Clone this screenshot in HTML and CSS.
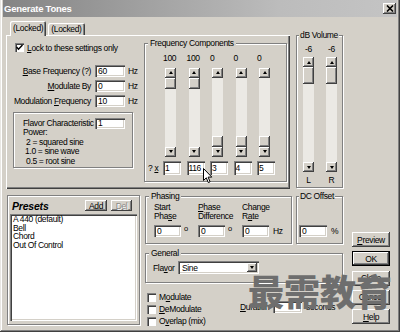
FILE: index.html
```html
<!DOCTYPE html>
<html>
<head>
<meta charset="utf-8">
<title>Generate Tones</title>
<link rel="stylesheet" href="styles.css">
</head>
<body>
<div class="window">
  <div class="titlebar">
    <span class="title">Generate Tones</span>
    <span class="xbtn"><svg width="8" height="7" viewBox="0 0 8 7"><path d="M1 0.5 L7 6.5 M7 0.5 L1 6.5" stroke="#000" stroke-width="1.6"/></svg></span>
  </div>
  <div class="client">
    <div class="main">
      <div class="top">
        <div class="tabctl">
          <div class="tabs">
            <div class="tab active">(Locked)</div>
            <div class="tab">(Locked)</div>
          </div>
          <div class="tabpage">
            <div class="leftcol">
              <div class="check">
                <span class="cb"><svg width="7" height="7" viewBox="0 0 7 7"><path d="M0.5 3 L2.5 5.2 L6.5 1" fill="none" stroke="#000" stroke-width="1.5"/></svg></span>
                <span><u>L</u>ock to these settings only</span>
              </div>
              <div class="fields">
                <div class="field"><span class="flabel"><u>B</u>ase Frequency (?)</span><span class="edit">60</span><span class="unit">Hz</span></div>
                <div class="field"><span class="flabel"><u>M</u>odulate By</span><span class="edit">0</span><span class="unit">Hz</span></div>
                <div class="field"><span class="flabel">Modulation <u>F</u>requency</span><span class="edit">10</span><span class="unit">Hz</span></div>
              </div>
              <div class="flavorbox">
                <div class="frow"><span class="frlabel">Flavor Characteristic</span><span class="edit small">1</span></div>
                <div class="pline">Power:</div>
                <div class="pline ind">2 = squared sine</div>
                <div class="pline ind2">1.0 = sine wave</div>
                <div class="pline ind">0.5 = root sine</div>
              </div>
            </div>
            <fieldset class="group freq">
              <legend>Frequency Components</legend>
              <div class="fgrid">
                <span></span>
                <span class="val">100</span>
                <span class="val">100</span>
                <span class="val">0</span>
                <span class="val">0</span>
                <span class="val">0</span>

                <span></span>
                <div class="slider"><span class="sb up"></span><span class="track"><span class="thumb"></span></span><span class="sb down"></span></div>
                <div class="slider"><span class="sb up"></span><span class="track"><span class="thumb"></span></span><span class="sb down"></span></div>
                <div class="slider"><span class="sb up"></span><span class="track low"><span class="thumb"></span></span><span class="sb down"></span></div>
                <div class="slider"><span class="sb up"></span><span class="track low"><span class="thumb"></span></span><span class="sb down"></span></div>
                <div class="slider"><span class="sb up"></span><span class="track low"><span class="thumb"></span></span><span class="sb down"></span></div>

                <span class="qx">? <u>x</u></span>
                <span class="edit">1</span>
                <span class="edit">116</span>
                <span class="edit">3</span>
                <span class="edit">4</span>
                <span class="edit">5</span>
              </div>
            </fieldset>
          </div>
        </div>
        <fieldset class="group vol">
          <legend>dB Volume</legend>
          <div class="vgrid">
            <span class="vlab">-6</span>
            <span class="vlab">-6</span>
            <div class="slider tall"><span class="sb up"></span><span class="track"><span class="thumb big"></span></span><span class="sb down"></span></div>
            <div class="slider tall"><span class="sb up"></span><span class="track"><span class="thumb big"></span></span><span class="sb down"></span></div>
            <span class="vlab">L</span>
            <span class="vlab">R</span>
          </div>
        </fieldset>
      </div>

      <div class="bottom">
        <div class="presets">
          <div class="phead">
            <span class="ptitle">Presets</span>
            <span class="btn add">Add</span>
            <span class="btn del">Del</span>
          </div>
          <div class="plist">
            <div>A 440 (default)</div>
            <div>Bell</div>
            <div>Chord</div>
            <div>Out Of Control</div>
          </div>
        </div>
        <div class="right">
          <div class="row1">
            <fieldset class="group phasing">
              <legend>Phasing</legend>
              <div class="pcols">
                <div class="pcol">
                  <div class="plabel">Start<br>Pha<u>s</u>e</div>
                  <div class="pin"><span class="edit w27">0</span><span class="deg">o</span></div>
                </div>
                <div class="pcol">
                  <div class="plabel"><u>P</u>hase<br>Difference</div>
                  <div class="pin"><span class="edit w27">0</span><span class="deg">o</span></div>
                </div>
                <div class="pcol">
                  <div class="plabel">Change<br>R<u>a</u>te</div>
                  <div class="pin"><span class="edit w27">0</span><span class="unit">Hz</span></div>
                </div>
              </div>
            </fieldset>
            <fieldset class="group dc">
              <legend>DC Offset</legend>
              <div class="pin dcin"><span class="edit w28">0</span><span class="unit">%</span></div>
            </fieldset>
          </div>
          <fieldset class="group general">
            <legend>General</legend>
            <div class="grow">
              <span class="glabel">Fla<u>v</u>or</span>
              <span class="combo"><span class="ctext">Sine</span><span class="cbtn"><span class="tri down"></span></span></span>
            </div>
          </fieldset>
          <div class="checkarea">
            <div class="checks">
              <div class="crow"><span class="cb"></span><span>M<u>o</u>dulate</span></div>
              <div class="crow"><span class="cb"></span><span><u>D</u>eModulate</span></div>
              <div class="crow"><span class="cb"></span><span>O<u>v</u>erlap (mix)</span></div>
            </div>
            <div class="duration">
              <span class="dlabel"><u>D</u>uration</span>
              <span class="edit w29">5</span>
              <span class="unit">seconds</span>
            </div>
          </div>
        </div>
      </div>
    </div>
    <div class="buttons">
      <span class="btn big"><u>P</u>review</span>
      <span class="btn big def">OK</span>
      <span class="btn big">Close</span>
      <span class="btn big">Cancel</span>
      <span class="btn big"><u>H</u>elp</span>
    </div>
  </div>
  <div class="watermark">最需教育</div>
  <svg class="cursor" width="10" height="16" viewBox="0 0 10 16"><path d="M0.5 0.5 L0.5 12.5 L3.3 9.8 L5.3 14.6 L7.1 13.8 L5.1 9.1 L8.8 9.1 Z" fill="#fff" stroke="#000" stroke-width="1" stroke-linejoin="miter"/></svg>
</div>
</body>
</html>
```

FILE: styles.css
```css
* { box-sizing: border-box; }
html, body { margin: 0; padding: 0; }
body {
  width: 400px;
  height: 332px;
  overflow: hidden;
  background: #d4d0c8;
  font-family: "Liberation Sans", Arial, sans-serif;
  font-size: 8.5px;
  letter-spacing: -0.35px;
  color: #000;
}
u { text-decoration: underline; text-underline-offset: 1px; }

.window {
  position: relative;
  width: 400px;
  height: 332px;
  background: #d4d0c8;
  padding: 0 3px 3px 3px;
  display: flex;
  flex-direction: column;
  box-shadow: inset -1px -1px #404040, inset 1px 0 #e8e6e2, inset -2px -2px #808080, inset 2px 0 #fff;
}

/* title bar */
.titlebar {
  height: 17px;
  display: flex;
  align-items: center;
  padding: 0 1px 0 1px;
  background: linear-gradient(to right, #848484, #bcbcbc 70%, #c4c4c4);
}
.title {
  flex: 1;
  color: #fff;
  font-weight: bold;
  font-size: 9.5px;
  letter-spacing: -0.25px;
}
.xbtn {
  width: 13px;
  height: 11px;
  display: flex;
  align-items: center;
  justify-content: center;
  background: #d4d0c8;
  box-shadow: inset -1px -1px #404040, inset 1px 1px #fff, inset -2px -2px #808080;
}

/* common widgets */
.edit {
  display: flex;
  align-items: center;
  width: 30px;
  height: 12px;
  padding-left: 3px;
  background: #fff;
  white-space: nowrap;
  overflow: hidden;
  box-shadow: inset 1px 1px #808080, inset 2px 2px #404040, inset -1px -1px #fff, inset -2px -2px #d4d0c8;
}
.edit.small { height: 11px; }
.edit.w27 { width: 27px; }
.edit.w28 { width: 28px; }
.edit.w29 { width: 29px; color: #fff; }
.unit { margin-left: 3px; }

.cb {
  width: 9px;
  height: 9px;
  flex: none;
  display: flex;
  align-items: center;
  justify-content: center;
  background: #fff;
  box-shadow: inset 1px 1px #808080, inset 2px 2px #404040, inset -1px -1px #fff;
}

.btn {
  display: flex;
  align-items: center;
  justify-content: center;
  background: #d4d0c8;
  box-shadow: inset -1px -1px #404040, inset 1px 1px #fff, inset -2px -2px #808080;
}

.group {
  margin: 0;
  padding: 0;
  min-width: 0;
  border: 1px solid #808080;
  box-shadow: inset 1px 1px #fff, 1px 1px #fff;
}
.group legend {
  padding: 0 2px;
  margin-left: 3px;
  line-height: 10px;
  height: 10px;
  white-space: nowrap;
  background: #d4d0c8;
}

/* layout */
.client {
  flex: 1;
  display: flex;
  padding-top: 4px;
}
.main { width: 340px; }
.top { display: flex; height: 168px; }

.tabctl { margin-left: 3px; width: 284px; }
.tabs {
  height: 14px;
  display: flex;
  align-items: flex-end;
  padding-left: 4px;
}
.tab {
  height: 12px;
  padding: 0 3px;
  margin-left: 2px;
  display: flex;
  align-items: center;
  border-radius: 2px 2px 0 0;
  box-shadow: inset 1px 1px #fff, inset -1px 0 #404040, inset -2px 0 #808080;
}
.tab.active {
  position: relative;
  z-index: 1;
  height: 15px;
  margin-left: 0;
  margin-bottom: -1px;
  padding: 0 3px 2px 3px;
  background: #d4d0c8;
}
.tabpage {
  height: 154px;
  display: flex;
  padding-left: 7px;
  box-shadow: inset 1px 1px #fff, inset -1px -1px #404040, inset -2px -2px #808080;
}

.leftcol {
  width: 128px;
  display: flex;
  flex-direction: column;
  padding-top: 8px;
}
.check {
  height: 9px;
  display: flex;
  align-items: center;
  gap: 3px;
  margin-left: 2px;
  white-space: nowrap;
}
.fields {
  margin-top: 13px;
  display: flex;
  flex-direction: column;
  gap: 3px;
}
.field {
  height: 12px;
  display: flex;
  align-items: center;
}
.flabel {
  width: 78px;
  text-align: right;
  white-space: nowrap;
  margin-right: 4px;
}
.flavorbox {
  margin-top: 5px;
  width: 120px;
  height: 56px;
  padding: 5px 0 0 9px;
  border: 1px solid #808080;
  box-shadow: inset 1px 1px #fff, 1px 1px #fff;
}
.frow { height: 10px; display: flex; align-items: center; }
.frlabel { width: 72px; white-space: nowrap; }
.pline { line-height: 9.7px; white-space: nowrap; }
.pline.ind { padding-left: 3px; }
.pline.ind2 { padding-left: 2px; }

.freq {
  margin-left: 3px;
  margin-top: 3px;
  width: 143px;
  height: 144px;
}
.fgrid {
  display: grid;
  grid-template-columns: 9.5px repeat(5, 18px);
  grid-template-rows: 10px 89px 14px;
  column-gap: 5.5px;
  row-gap: 4.5px;
  padding: 5px 0 0 3px;
}
.val { line-height: 10px; }
.qx { white-space: nowrap; align-self: center; }
.fgrid .edit { width: 18px; height: 14px; padding-left: 2px; }

.slider {
  width: 11px;
  height: 89px;
  margin-left: 2px;
  display: flex;
  flex-direction: column;
}
.slider.tall { height: 115px; margin-left: 0; }
.sb {
  height: 10px;
  flex: none;
  display: flex;
  align-items: center;
  justify-content: center;
  background: #d4d0c8;
  box-shadow: inset -1px -1px #404040, inset 1px 1px #fff, inset -2px -2px #808080;
}
.sb::after {
  content: "";
  width: 0;
  height: 0;
  border-left: 2.5px solid transparent;
  border-right: 2.5px solid transparent;
}
.sb.up::after { border-bottom: 3px solid #000; }
.sb.down::after { border-top: 3px solid #000; }
.track {
  flex: 1;
  display: flex;
  flex-direction: column;
  background: #ebe9e4;
}
.track.low { justify-content: flex-end; }
.thumb {
  height: 11px;
  background: #d4d0c8;
  box-shadow: inset -1px -1px #404040, inset 1px 1px #fff, inset -2px -2px #808080;
}
.thumb.big { height: 17px; }

.vol {
  margin-left: 6px;
  margin-top: 9px;
  width: 47px;
  height: 158px;
}
.vol legend { margin-left: 2px; padding: 0 1px; }
.vgrid {
  display: grid;
  grid-template-columns: 11px 11px;
  grid-template-rows: 10px 115px 10px;
  column-gap: 12px;
  row-gap: 3px;
  padding: 4px 0 0 6px;
}
.vlab { text-align: center; line-height: 10px; }

/* bottom */
.bottom { display: flex; }
.presets {
  margin-left: 4px;
  margin-top: 6px;
  width: 133px;
  height: 130px;
  padding: 4px 2px 3px 2px;
  display: flex;
  flex-direction: column;
  border: 1px solid #808080;
  box-shadow: inset 1px 1px #fff, 1px 1px #fff;
}
.phead {
  height: 11px;
  display: flex;
  align-items: center;
  padding: 0 5px 0 2px;
}
.ptitle {
  flex: 1;
  font-weight: bold;
  font-style: italic;
  font-size: 10.5px;
  letter-spacing: -0.2px;
}
.btn.add { width: 22px; height: 11px; }
.btn.del { width: 21px; height: 11px; margin-left: 4px; color: #8c8a86; text-shadow: 1px 1px #fff; }
.plist {
  margin-top: 3px;
  flex: 1;
  background: #fff;
  padding: 1px 3px;
  line-height: 8.7px;
  box-shadow: inset 1px 1px #808080, inset 2px 2px #404040, inset -1px -1px #fff, inset -2px -2px #d4d0c8;
}

.right {
  margin-left: 5px;
  margin-top: 2px;
  width: 198px;
}
.row1 { display: flex; gap: 4px; }
.phasing { width: 147px; height: 53px; }
.dc { width: 47px; height: 53px; }
.dc legend { margin-left: 2px; padding: 0 1px; }
.pcols { display: flex; padding: 1.5px 0 0 8px; }
.pcol { width: 44px; }
.plabel { line-height: 9px; white-space: nowrap; }
.pin { display: flex; align-items: flex-start; margin-top: 4.5px; }
.pin .unit { align-self: center; margin-left: 4px; }
.deg { font-size: 7.5px; line-height: 7px; margin-left: 3px; }
.dcin { margin-top: 24px; padding-left: 2px; }

.general { margin-top: 4px; width: 198px; height: 35px; }
.grow { display: flex; align-items: center; padding: 3px 0 0 7px; }
.glabel { width: 25px; }
.combo {
  width: 81px;
  height: 13px;
  display: flex;
  align-items: center;
  padding: 2px 2px 2px 4px;
  background: #fff;
  box-shadow: inset 1px 1px #808080, inset 2px 2px #404040, inset -1px -1px #fff, inset -2px -2px #d4d0c8;
}
.ctext { flex: 1; }
.cbtn {
  width: 10px;
  height: 9px;
  display: flex;
  align-items: center;
  justify-content: center;
  background: #d4d0c8;
  box-shadow: inset -1px -1px #404040, inset 1px 1px #fff, inset -2px -2px #808080;
}
.tri { width: 0; height: 0; border-left: 2.5px solid transparent; border-right: 2.5px solid transparent; }
.tri.down { border-top: 3px solid #000; }

.checkarea { display: flex; margin-top: 8px; margin-left: 2px; }
.checks { width: 93px; }
.crow { height: 12px; display: flex; align-items: center; gap: 3px; white-space: nowrap; }
.duration { display: flex; align-items: center; height: 12px; margin-top: 10px; }
.dlabel { width: 33px; white-space: nowrap; }
.duration .unit { margin-left: 4px; }

.buttons {
  margin-left: 9px;
  margin-top: auto;
  margin-bottom: 5px;
  display: flex;
  flex-direction: column;
  gap: 4.25px;
}
.btn.big { width: 38px; height: 15px; }
.btn.def { box-shadow: inset 0 0 0 1px #000, inset -2px -2px #404040, inset 2px 2px #fff, inset -3px -3px #808080; }

/* overlays */
.watermark {
  position: absolute;
  left: 248px;
  top: 269px;
  font-family: "Noto Sans CJK SC", sans-serif;
  font-weight: 900;
  font-size: 36px;
  line-height: 42px;
  letter-spacing: 0;
  color: #6e6e6e;
  white-space: nowrap;
}
.cursor {
  position: absolute;
  left: 203px;
  top: 168px;
}
```
